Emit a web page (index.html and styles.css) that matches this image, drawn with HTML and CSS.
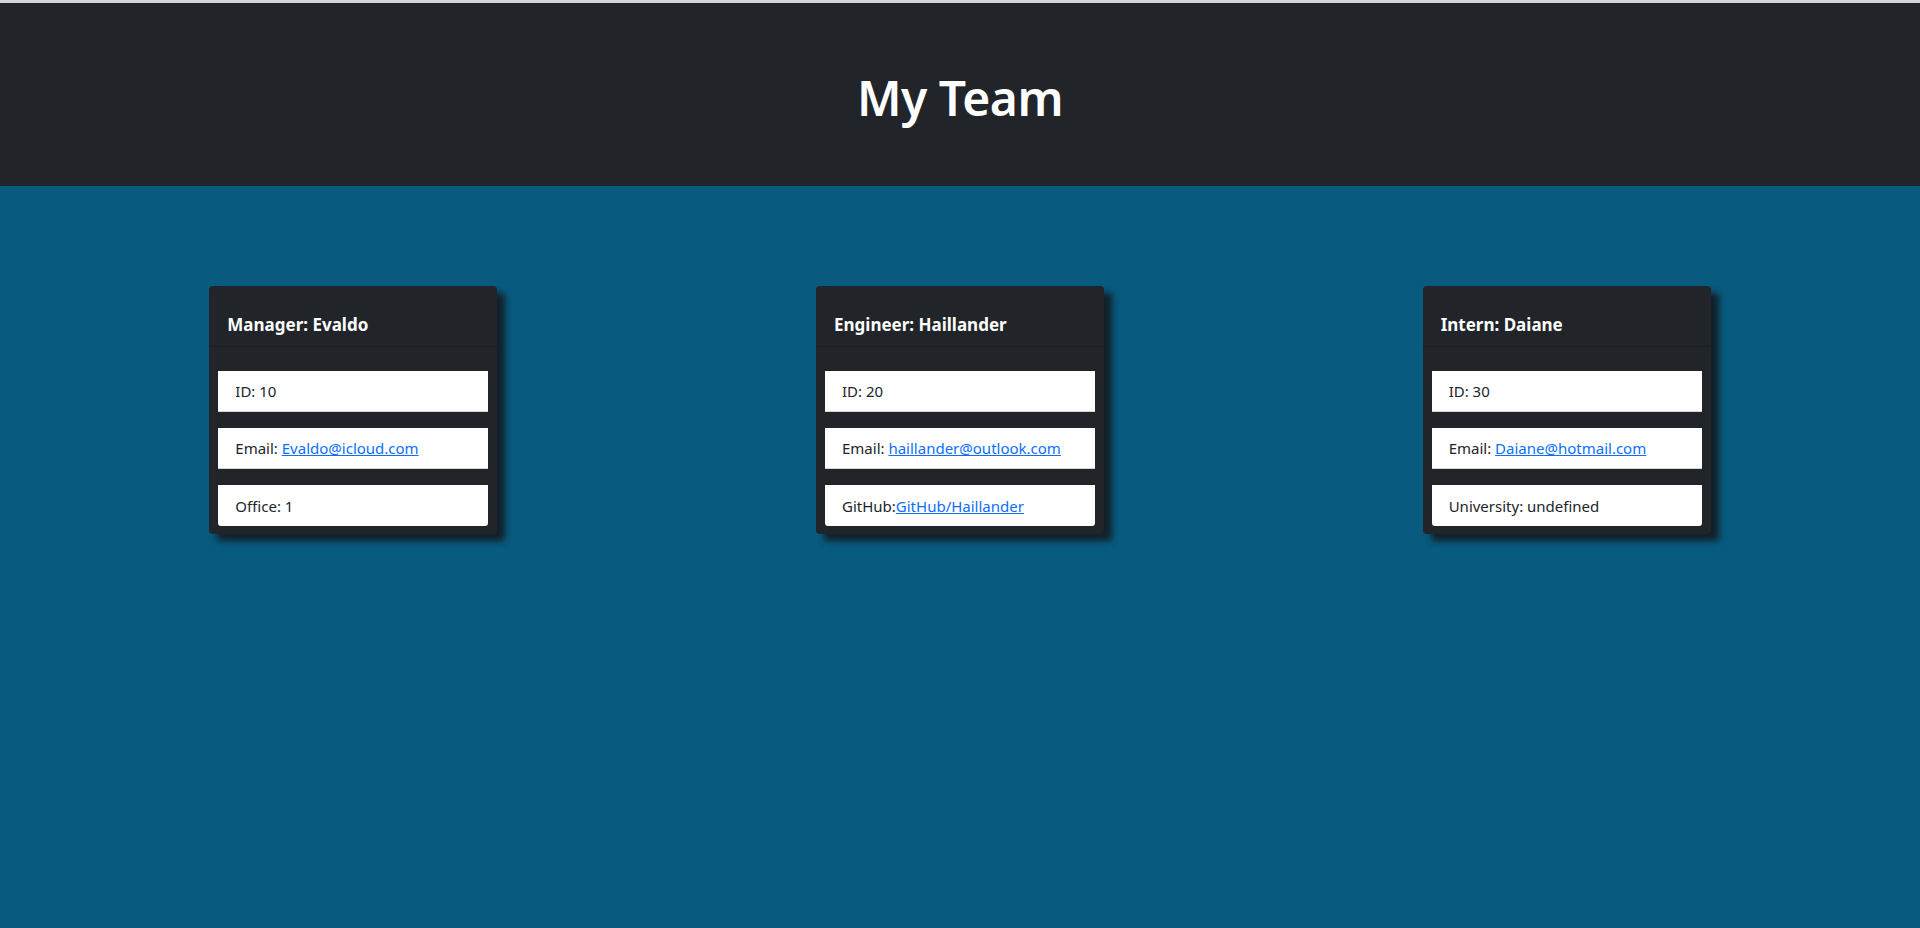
FILE: index.html
```html
<!DOCTYPE html>
<html lang="en">
<head>
<meta charset="utf-8">
<title>My Team</title>
<link rel="stylesheet" href="styles.css">
</head>
<body>
<header class="hero">
  <h1 class="hero-title">My Team</h1>
</header>
<main class="team">
  <div class="card">
    <div class="card-header">Manager: Evaldo</div>
    <ul class="card-list">
      <li class="item">ID: 10</li>
      <li class="item">Email:&nbsp;<a href="#">Evaldo@icloud.com</a></li>
      <li class="item last">Office: 1</li>
    </ul>
  </div>
  <div class="card">
    <div class="card-header">Engineer: Haillander</div>
    <ul class="card-list">
      <li class="item">ID: 20</li>
      <li class="item">Email:&nbsp;<a href="#">haillander@outlook.com</a></li>
      <li class="item last">GitHub:<a href="#">GitHub/Haillander</a></li>
    </ul>
  </div>
  <div class="card">
    <div class="card-header">Intern: Daiane</div>
    <ul class="card-list">
      <li class="item">ID: 30</li>
      <li class="item">Email:&nbsp;<a href="#">Daiane@hotmail.com</a></li>
      <li class="item last">University: undefined</li>
    </ul>
  </div>
</main>
</body>
</html>
```

FILE: styles.css
```css
* { box-sizing: border-box; }
html, body { height: 100%; }
body {
  margin: 0;
  font-family: "Noto Sans", "Open Sans", Arial, sans-serif;
  background: #085a7f;
  border-top: 3px solid #d6d6d6;
  display: flex;
  flex-direction: column;
}
.hero {
  background: #212529;
  height: 183px;
  padding-top: 5px;
  display: flex;
  align-items: center;
  justify-content: center;
}
.hero-title {
  margin: 0;
  color: #ffffff;
  font-size: 48px;
  font-weight: 600;
  letter-spacing: -0.5px;
}
.team {
  flex: 1;
  display: flex;
  justify-content: space-around;
  align-items: flex-start;
  padding: 100px 50px 0;
}
.card {
  width: 288px;
  background: #212529;
  border-radius: 4px;
  box-shadow: 8px 7px 6px rgba(20, 22, 25, 0.85);
}
.card-header {
  height: 61px;
  padding: 27px 18px 0;
  color: #ffffff;
  font-size: 17px;
  line-height: 24px;
  font-weight: 700;
  border-bottom: 1px solid rgba(0, 0, 0, 0.15);
}
.card-list {
  list-style: none;
  margin: 0;
  padding: 24px 9px 8px;
  display: flex;
  flex-direction: column;
  gap: 16px;
}
.item {
  height: 41px;
  display: flex;
  align-items: center;
  padding: 0 17px;
  background: #ffffff;
  color: #212529;
  font-size: 15px;
  border-bottom: 1px solid #d4d7da;
}
.item.last {
  border-bottom: none;
  border-radius: 0 0 3px 3px;
}
.item a {
  color: #0d6efd;
  text-decoration: underline;
}
```
